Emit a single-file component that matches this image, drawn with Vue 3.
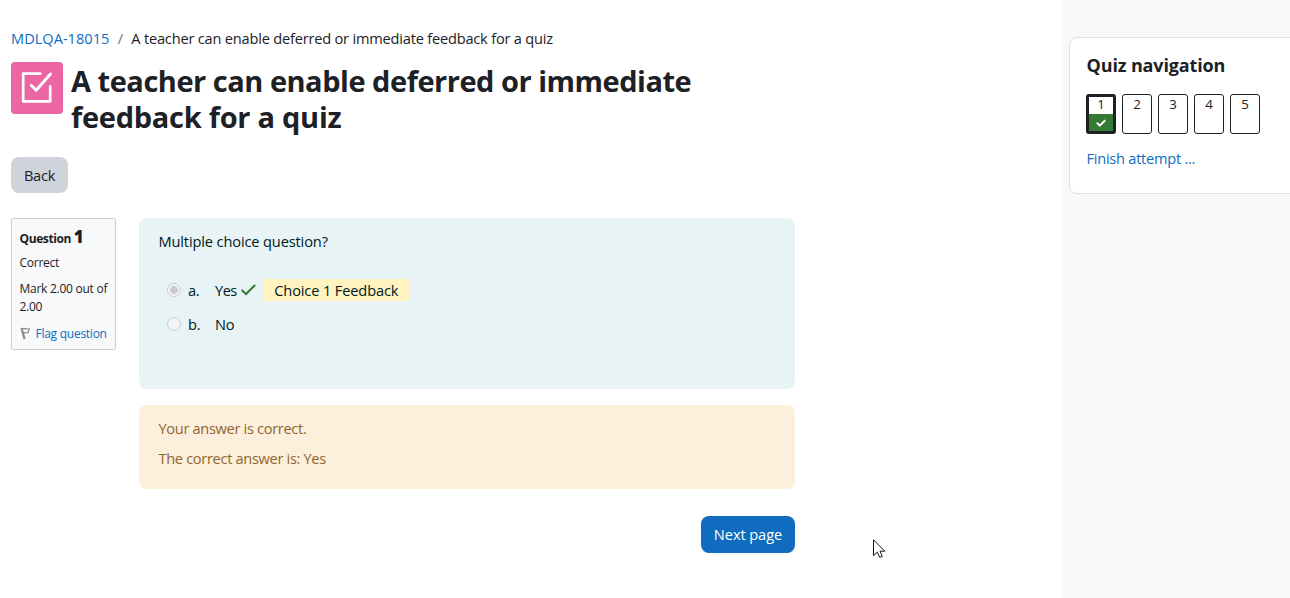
<script setup>
const pages = [1, 2, 3, 4, 5]
</script>

<template>
  <div class="page">
    <main class="main">
      <nav class="crumbs">
        <a class="t-course">MDLQA-18015</a><span class="sep">/</span><span class="t-crumb">A teacher can enable deferred or immediate feedback for a quiz</span>
      </nav>
      <header class="head">
        <div class="activity">
          <svg width="52" height="52" viewBox="0 0 52 52" fill="none" stroke="#fff" stroke-width="2.7" stroke-linecap="round" stroke-linejoin="round">
            <path d="M29.3 11.7H12.2V39.3H39.2V24.3" />
            <path d="M20.2 23.3L25.2 28.3L39.5 12" stroke-width="3" />
          </svg>
        </div>
        <h1><span class="h-one">A teacher can enable deferred or immediate</span><span class="h-two">feedback for a quiz</span></h1>
      </header>
      <button class="back"><span>Back</span></button>

      <section class="question">
        <aside class="info">
          <div class="qno"><span class="t-q">Question</span> <b>1</b></div>
          <div class="state">Correct</div>
          <div class="mark">Mark 2.00 out of<br />2.00</div>
          <a class="flag">
            <svg width="11" height="13" viewBox="0 0 11 13" fill="none" stroke="#858789" stroke-width="1.1">
              <path d="M1 1.2L4 12.2M1.5 1.8C4 .4 5 2.8 9.8 1.8C8.4 3 8.2 4.2 8.3 5.5C6 6.2 4.5 4.8 2.7 6.7M2.2 1.5L5 12" />
            </svg>
            <span>Flag question</span>
          </a>
        </aside>
        <div class="content">
          <div class="formulation">
            <p class="t-mcq">Multiple choice question?</p>
            <div class="answer">
              <i class="radio on"></i><span class="letter">a.</span><span class="t-yes">Yes</span>
              <svg class="tick" width="15" height="12" viewBox="0 0 15 12" fill="none" stroke="#357a32" stroke-width="2" stroke-linecap="round">
                <path d="M1.2 6.4L5 10L13.6 1.5" />
              </svg>
              <span class="feedback"><span>Choice 1 Feedback</span></span>
            </div>
            <div class="answer">
              <i class="radio"></i><span class="letter">b.</span><span class="t-no">No</span>
            </div>
          </div>
          <div class="outcome">
            <p class="t-your">Your answer is correct.</p>
            <p class="t-the">The correct answer is: Yes</p>
          </div>
          <button class="next"><span>Next page</span></button>
        </div>
      </section>
    </main>

    <aside class="drawer">
      <section class="card">
        <h2><span>Quiz navigation</span></h2>
        <div class="buttons">
          <a v-for="n in pages" :key="n" class="qbtn" :class="{ current: n === 1 }">
            <span>{{ n }}</span>
            <i v-if="n === 1" class="trafficlight">
              <svg width="10" height="9" viewBox="0 0 10 9" fill="none" stroke="#fff" stroke-width="2">
                <path d="M.8 4.6L3.8 7.6L9.2 2.2" />
              </svg>
            </i>
          </a>
        </div>
        <a class="finish">Finish attempt ...</a>
      </section>
    </aside>

    <svg class="cursor" width="13" height="20" viewBox="0 0 13 20" fill="#fff" stroke="#10101c" stroke-width="1">
      <path d="M.5 .8V16.6L4.3 13.2L6.7 18.4L9.3 17.4L7 12.2H11.8Z" />
    </svg>
  </div>
</template>

<style>
body {
  margin: 0;
  background: #fff;
}
</style>

<style scoped>
.page {
  position: relative;
  display: flex;
  width: 1290px;
  height: 598px;
  overflow: hidden;
  font: 14.6px/22px "Open Sans", "Noto Sans", sans-serif;
  letter-spacing: -0.25px;
  color: #1d2125;
}
h1, h2, p { margin: 0; }
span { white-space: nowrap; }
a { color: #0f6cbf; }
button {
  font: inherit;
  letter-spacing: inherit;
  border: 0;
  padding: 0;
  border-radius: 8px;
}
.main {
  display: flex;
  flex-direction: column;
  width: 1052px;
  padding: 27px 0 0 11px;
}
.crumbs {
  display: flex;
  height: 35px;
}
.t-course { letter-spacing: 0; }
.t-crumb { letter-spacing: -0.2px; }
.sep { width: 22px; text-align: center; color: #6a737b; }
.head { display: flex; gap: 8px; height: 95px; }
.activity {
  width: 52px;
  height: 52px;
  border-radius: 4px;
  background: #eb66a2;
}
.activity svg { display: block; }
h1 {
  padding-top: 1px;
  font-size: 29px;
  line-height: 36px;
  font-weight: 700;
}
h1 span { display: block; }
.h-one { letter-spacing: -0.48px; }
.h-two { letter-spacing: -0.27px; }
.back {
  width: 57px;
  height: 36px;
  background: #ced4da;
  color: #1d2125;
}
.question { display: flex; gap: 23px; margin-top: 25px; align-items: flex-start; }
.info {
  box-sizing: border-box;
  width: 105px;
  height: 132px;
  border: 1px solid #cad0d7;
  border-radius: 2px;
  background: #f8f9fa;
  padding: 7px 0 0 7.5px;
  font-size: 12px;
  line-height: 18px;
  letter-spacing: -0.26px;
  white-space: nowrap;
}
.qno { height: 28px; line-height: 22px; font-weight: 700; }
.t-q { letter-spacing: -0.4px; }
.qno b { font-size: 17px; }
.state { height: 26px; }
.mark { height: 45px; }
.flag { display: flex; gap: 5px; }
.flag svg { margin-top: 2px; }
.content { display: flex; flex-direction: column; width: 656px; }
.formulation {
  box-sizing: border-box;
  height: 171px;
  padding: 12px 19.5px;
  border-radius: 8px;
  background: #e7f3f5;
  color: #001a1e;
}
.formulation p { height: 43px; letter-spacing: -0.13px; }
.answer { display: flex; align-items: center; height: 34px; padding: 0 0 0 8.5px; }
.radio {
  box-sizing: border-box;
  width: 14px;
  height: 14px;
  border: 1px solid #cacdce;
  border-radius: 50%;
  background: #f0f4f5;
}
.radio.on { background: radial-gradient(circle, #c9cbcc 0 3.7px, #f0f4f5 4.3px); }
.letter { width: 27px; margin-left: 7px; }
.t-yes { letter-spacing: -0.5px; }
.tick { margin-left: 4px; }
.feedback {
  width: 147px;
  height: 22px;
  margin-left: 7px;
  background: #fff3bf;
  text-align: center;
  letter-spacing: -0.13px;
}
.outcome {
  box-sizing: border-box;
  height: 84px;
  margin-top: 16px;
  padding: 12px 19.5px;
  border-radius: 8px;
  background: #fcefdc;
  color: #8e662e;
  letter-spacing: -0.32px;
}
.outcome p { height: 30px; }
.next {
  align-self: flex-end;
  width: 94px;
  height: 37px;
  margin-top: 27px;
  padding-bottom: 2px;
  background: #0f6cbf;
  color: #fff;
  letter-spacing: -0.08px;
}
.drawer {
  box-sizing: border-box;
  width: 227px;
  padding: 37px 0 0 6px;
  background: #f8f9fa;
}
.card {
  box-sizing: border-box;
  width: 240px;
  height: 157px;
  padding: 15px 16.5px;
  border: 1px solid #dee0e2;
  border-radius: 8px;
  background: #fff;
}
h2 { height: 41px; font-size: 18px; line-height: 24px; letter-spacing: -0.14px; }
.buttons { display: flex; gap: 6px; margin-left: -0.5px; }
.qbtn {
  box-sizing: border-box;
  display: flex;
  flex-direction: column;
  width: 30px;
  height: 40px;
  border: 1px solid #1d2125;
  border-radius: 3px;
  color: #1d2125;
  text-align: center;
  font-size: 13.3px;
  line-height: 19px;
}
.qbtn.current { border-width: 3px; line-height: 15px; }
.trafficlight {
  display: flex;
  align-items: center;
  justify-content: center;
  height: 17px;
  margin-top: 2px;
  background: #357a32;
}
.finish { display: block; margin-top: 13px; }
.cursor { position: absolute; left: 873px; top: 539px; }
</style>
